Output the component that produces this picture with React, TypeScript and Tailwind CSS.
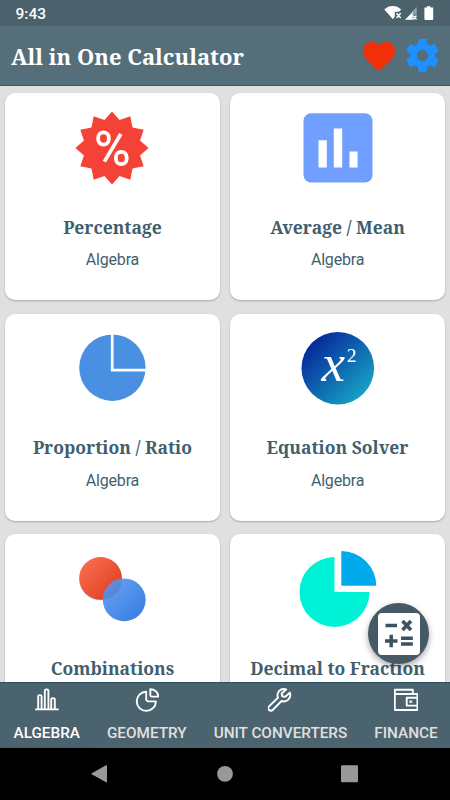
import type { ReactNode } from 'react';

interface Calculator {
  title: string;
  category?: string;
  icon: ReactNode;
}

interface Tab {
  label: string;
  icon: ReactNode;
}

const badgePoints = Array.from({ length: 24 }, (_, i) => {
  const radius = i % 2 === 0 ? 36.6 : 29;
  const angle = (i * Math.PI) / 12;
  return `${36 + radius * Math.sin(angle)},${36 - radius * Math.cos(angle)}`;
}).join(' ');

const PercentageIcon = () => (
  <>
    <polygon points={badgePoints} fill="#f44336" />
    <g fill="none" stroke="#fff" strokeWidth="3.8">
      <rect x="22.2" y="20.4" width="10.6" height="12.2" rx="5.3" />
      <rect x="39.9" y="39.8" width="10.8" height="12.4" rx="5.4" />
      <path d="M44.8 22 28.4 49.6" strokeWidth="3.7" />
    </g>
  </>
);

const AverageIcon = () => (
  <>
    <rect x="1.5" y="1.2" width="69" height="69.2" rx="7.5" fill="#709fff" />
    <path
      d="M16.5 28.2h8.3v27.3h-8.3zM31.8 16.5h8.4v39h-8.4zM47.5 39.5h8.1v16h-8.1z"
      fill="#fff"
    />
  </>
);

const ProportionIcon = () => (
  <>
    <circle cx="36.4" cy="35.7" r="33.2" fill="#4990e2" />
    <path d="M36.2 1v37.1h35" fill="none" stroke="#fff" strokeWidth="2.7" />
  </>
);

const EquationIcon = () => (
  <>
    <defs>
      <linearGradient id="equation" x1="0.15" y1="0.15" x2="0.85" y2="0.85">
        <stop offset="0" stopColor="#062a9c" />
        <stop offset="1" stopColor="#16a0c2" />
      </linearGradient>
    </defs>
    <circle cx="35.8" cy="36.2" r="36.3" fill="url(#equation)" />
    <g fill="#fff" className="font-['Liberation_Serif']">
      <text x="19.6" y="49.4" fontSize="53" fontStyle="italic">
        x
      </text>
      <text x="44.8" y="30" fontSize="19.5">
        2
      </text>
    </g>
  </>
);

const CombinationsIcon = () => (
  <>
    <defs>
      <linearGradient id="red" x1="0" y1="0" x2="1" y2="1">
        <stop offset="0" stopColor="#ff7152" />
        <stop offset="1" stopColor="#d93a1e" />
      </linearGradient>
      <linearGradient id="blue" x1="0" y1="0" x2="1" y2="1">
        <stop offset="0" stopColor="#5b9cf0" />
        <stop offset="1" stopColor="#1d6bdc" />
      </linearGradient>
    </defs>
    <circle cx="24.6" cy="25.8" r="21.5" fill="#8b8b8b" opacity="0.6" />
    <circle cx="24.6" cy="25.4" r="21.3" fill="url(#red)" />
    <circle cx="48.2" cy="46.8" r="21.4" fill="url(#blue)" opacity="0.9" />
  </>
);

const FractionIcon = () => (
  <>
    <path d="M32.5 39V4a35 35 0 1 0 35 35z" fill="#00f2d6" />
    <path d="M39.3 32.8V-2a35 35 0 0 1 35 34.8z" fill="#00aaec" />
  </>
);

const calculators: Calculator[] = [
  { title: 'Percentage', category: 'Algebra', icon: <PercentageIcon /> },
  { title: 'Average / Mean', category: 'Algebra', icon: <AverageIcon /> },
  { title: 'Proportion / Ratio', category: 'Algebra', icon: <ProportionIcon /> },
  { title: 'Equation Solver', category: 'Algebra', icon: <EquationIcon /> },
  { title: 'Combinations', icon: <CombinationsIcon /> },
  { title: 'Decimal to Fraction', icon: <FractionIcon /> },
];

const tabs: Tab[] = [
  {
    label: 'ALGEBRA',
    icon: (
      <path d="M1 21.4h22M3.2 21V8.6q0-1.500 1.700-1.500t1.700 1.500V21M9.800 21V3q0-1.600 1.800-1.600T13.400 3v18M16.200 21v-9.400q0-1.500 1.800-1.500t1.800 1.500V21" />
    ),
  },
  {
    label: 'GEOMETRY',
    icon: (
      <>
        <path d="M11.200 3.700a9.600 9.600 0 1 0 9.700 9.700h-8.200l-1.500-1.500z" />
        <path d="M15.300 1.200v6.400l1 1h7c0-4.200-3.500-7.400-8-7.400z" />
      </>
    ),
  },
  {
    label: 'UNIT CONVERTERS',
    icon: (
      <path d="M18.200 1.500c-5.700-2-10.200 3-8.200 8.200L1 18.400a2.600 2.600 0 0 0 0 3.600 2.600 2.600 0 0 0 3.700 0l8.800-9c5 2 10.300-2.800 8.300-8.400l-4.500 4.200-3.100-.5-.6-2.800z" />
    ),
  },
  {
    label: 'FINANCE',
    icon: (
      <>
        <path d="M18.800 6V1.800H.8v20.200h22.600V6H.8M23.400 9.800H12.700v7.800h10.700" />
        <path d="M16.200 12.900h1.600v1.600h-1.600z" strokeWidth="1" />
      </>
    ),
  },
];

const StatusBar = () => (
  <div className="flex h-[26px] shrink-0 items-center justify-between bg-[#4b616c] pl-[15.5px] pr-[15px] text-white">
    <span className="pt-[3px] text-[15.5px] font-medium leading-none">9:43</span>
    <svg width="51" height="16" viewBox="0 0 51 16" fill="#fff">
      <path d="M.3 4.400C5-.1 12.500-.1 17.200 4.400L15 6.800h-4.200v4.800L9 14.300z" />
      <path d="m12.500 8.200 4.200 4.800m0-4.800L12.500 13M29 10.500l3.500 4m0-4-3.500 4" stroke="#fff" strokeWidth="1.4" />
      <path d="M32.700 2v7.500h-5V7z" opacity="0.4" />
      <path d="M19.800 14.800 27.700 7v7.800zM42 2.500V1.300h3.500v1.200h2.700V14q0 1-1 1h-6.800q-1 0-1-1V2.500z" transform="translate(1 0)" />
    </svg>
  </div>
);

const Header = () => (
  <header className="flex h-[60px] shrink-0 items-center justify-between border-b border-[#3d5a6b] bg-[#546e7a] px-[11px]">
    <h1 className="whitespace-nowrap pt-[2px] font-['Noto_Serif','DejaVu_Serif',serif] text-[22px] font-bold text-white">
      All in One Calculator
    </h1>
    <div className="flex items-center gap-[11px]">
      <svg width="32" height="30" viewBox="0 0 32 30" fill="#ef3009">
        <path d="M16 30C7 22 0 17.5 0 9.500 0 4.300 4 .700 8.700.700c3 0 5.700 1.200 7.300 3.800C17.600 1.900 20.300.700 23.300.700 28 .700 32 4.300 32 9.500 32 17.500 25 22 16 30z" />
      </svg>
      <svg width="33" height="33" viewBox="2 2 20 20" fill="#1e90ff">
        <path d="M19.430 12.980c.040-.320.070-.640.070-.980s-.030-.660-.070-.980l2.110-1.650c.190-.150.240-.420.120-.640l-2-3.460c-.120-.220-.390-.300-.610-.220l-2.490 1c-.520-.400-1.080-.730-1.690-.980l-.380-2.650A.488.488 0 0 0 14 2h-4c-.250 0-.460.180-.490.420l-.380 2.650c-.610.250-1.170.590-1.690.980l-2.490-1c-.230-.090-.490 0-.610.220l-2 3.460c-.130.220-.070.490.120.640l2.110 1.650c-.040.320-.070.650-.070.980s.030.660.070.980l-2.110 1.650c-.190.150-.240.420-.120.640l2 3.460c.120.220.390.300.610.220l2.490-1c.520.400 1.080.730 1.690.980l.380 2.650c.030.240.240.420.490.420h4c.250 0 .460-.180.490-.420l.380-2.650c.610-.250 1.170-.590 1.690-.980l2.490 1c.230.090.490 0 .610-.220l2-3.460c.120-.220.070-.490-.120-.640zM12 15.500a3.500 3.500 0 1 1 0-7 3.500 3.500 0 0 1 0 7z" />
      </svg>
    </div>
  </header>
);

const Card = ({ title, category, icon }: Calculator) => (
  <article className="flex h-[207px] flex-col items-center rounded-[10px] bg-white pt-[18.5px] text-[#3f5f6e] shadow-[0_1px_2px_rgba(0,0,0,0.25)]">
    <svg width="72" height="72" viewBox="0 0 72 72" className="overflow-visible">
      {icon}
    </svg>
    <h2 className="mt-[31px] whitespace-nowrap font-['Noto_Serif','DejaVu_Serif',serif] text-[17.5px] font-bold leading-6">
      {title}
    </h2>
    {category && <p className="mt-[11.5px] text-base leading-5 tracking-[-0.2px]">{category}</p>}
  </article>
);

const CalculatorButton = () => (
  <button
    type="button"
    aria-label="calculator"
    className="absolute bottom-[18px] right-[21px] flex size-[61px] items-center justify-center rounded-full bg-[#455a64] shadow-[0_3px_6px_rgba(0,0,0,0.35)]"
  >
    <svg width="42" height="42" viewBox="0 0 42 42">
      <rect width="42" height="42" rx="4" fill="#fff" />
      <path
        d="M7.500 12.500H19M24.500 8l8.500 9m0-9-8.500 9M7 28h12.500M13.200 21.800v12.500M23 25.200h11.800M23 31h11.800"
        stroke="#3c525e"
        strokeWidth="3.5"
      />
    </svg>
  </button>
);

const TabBar = () => (
  <nav className="flex h-[66px] shrink-0 border-t border-[#294f60] bg-[#4b636e]">
    {tabs.map(({ label, icon }, index) => (
      <button
        key={label}
        type="button"
        className={`flex shrink-0 flex-col items-center px-[13.5px] pt-[4.5px] ${
          index === 0 ? 'border-b border-[#455a64] text-white' : 'text-[#e0e0e0]'
        }`}
      >
        <svg
          width="24"
          height="24"
          viewBox="0 0 24 24"
          fill="none"
          stroke="#fff"
          strokeWidth="1.9"
          strokeLinejoin="round"
          strokeLinecap="round"
        >
          {icon}
        </svg>
        <span className="mt-[11px] whitespace-nowrap text-[15.3px] font-medium leading-5">{label}</span>
      </button>
    ))}
  </nav>
);

const NavigationBar = () => (
  <div className="flex h-[52px] shrink-0 items-center justify-center bg-black">
    <svg width="268" height="20" viewBox="0 0 268 20" fill="#999">
      <path d="M.8 9.300 15 1.300q1-.5 1 .5v16q0 1-1 .5L.8 10.300q-.8-.5 0-1z" />
      <circle cx="134" cy="9.900" r="7.900" />
      <rect x="250" y="1.300" width="17" height="17" rx="1" />
    </svg>
  </div>
);

const App = () => (
  <div className="flex h-[800px] w-[450px] flex-col overflow-hidden bg-[#e0e0e0] font-[Roboto,sans-serif]">
    <StatusBar />
    <Header />
    <main className="relative min-h-0 flex-1 overflow-hidden">
      <div className="grid grid-cols-2 gap-x-[10.8px] gap-y-[13.7px] px-[5.3px] pt-[7px]">
        {calculators.map((calculator) => (
          <Card key={calculator.title} {...calculator} />
        ))}
      </div>
      <CalculatorButton />
    </main>
    <TabBar />
    <NavigationBar />
  </div>
);

export default App;
